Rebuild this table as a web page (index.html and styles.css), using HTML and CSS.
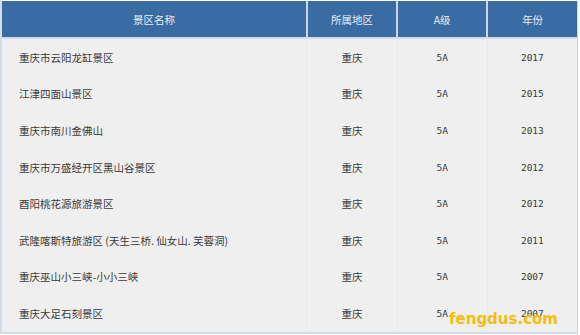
FILE: index.html
```html
<!DOCTYPE html>
<html lang="zh">
<head>
<meta charset="utf-8">
<link rel="stylesheet" href="styles.css">
</head>
<body>
<div class="wrap">
<table class="tbl">
  <colgroup>
    <col class="c1"><col class="c2"><col class="c3"><col class="c4">
  </colgroup>
  <thead>
    <tr><th>景区名称</th><th>所属地区</th><th>A级</th><th>年份</th></tr>
  </thead>
  <tbody>
    <tr><td class="name">重庆市云阳龙缸景区</td><td>重庆</td><td class="num">5A</td><td class="num">2017</td></tr>
    <tr><td class="name">江津四面山景区</td><td>重庆</td><td class="num">5A</td><td class="num">2015</td></tr>
    <tr><td class="name">重庆市南川金佛山</td><td>重庆</td><td class="num">5A</td><td class="num">2013</td></tr>
    <tr><td class="name">重庆市万盛经开区黑山谷景区</td><td>重庆</td><td class="num">5A</td><td class="num">2012</td></tr>
    <tr><td class="name">酉阳桃花源旅游景区</td><td>重庆</td><td class="num">5A</td><td class="num">2012</td></tr>
    <tr><td class="name">武隆喀斯特旅游区 (天生三桥. 仙女山. 芙蓉洞)</td><td>重庆</td><td class="num">5A</td><td class="num">2011</td></tr>
    <tr><td class="name">重庆巫山小三峡-小小三峡</td><td>重庆</td><td class="num">5A</td><td class="num">2007</td></tr>
    <tr><td class="name">重庆大足石刻景区</td><td>重庆</td><td class="num">5A</td><td class="num">2007</td></tr>
  </tbody>
</table>
<div class="mark">fengdus.com</div>
</div>
</body>
</html>
```
FILE: styles.css
```css
html, body {
  margin: 0;
  padding: 0;
  background: #ffffff;
}
.wrap {
  position: relative;
  width: 580px;
  height: 335px;
  padding: 1px 0 0 0;
  box-sizing: border-box;
}
.tbl {
  width: 578px;
  margin-left: 0;
  border-collapse: collapse;
  table-layout: fixed;
  font-family: "Noto Sans CJK SC", "DejaVu Sans", sans-serif;
  font-size: 10.5px;
  color: #3a3a3a;
  border-left: 2px solid #d3dde8;
  border-right: 1px solid #c9d3de;
  border-bottom: 2px solid #d3dbe4;
}
.c1 { width: 305px; }
.c2 { width: 90px; }
.c3 { width: 90px; }
.c4 { width: 90px; }
.tbl th {
  height: 36px;
  padding: 0;
  background: #3b6ba3;
  color: #e8eef6;
  font-weight: normal;
  text-align: center;
  border-left: 2px solid #c9d7e6;
  border-bottom: 2px solid #d2dbe5;
}
.tbl th:first-child { border-left: none; }
.tbl td {
  height: 36.6px;
  padding: 0;
  background: #efefef;
  text-align: center;
  border-left: 1px solid #e9e9e9;
}
.tbl td.name {
  text-align: left;
  padding-left: 17px;
  border-left: none;
}
.tbl td.num {
  font-family: "DejaVu Sans Mono", monospace;
  font-size: 9.5px;
}
.mark {
  position: absolute;
  left: 449px;
  top: 310px;
  font-family: "DejaVu Sans", sans-serif;
  font-weight: bold;
  font-size: 15px;
  color: #f6bd0f;
}
```
